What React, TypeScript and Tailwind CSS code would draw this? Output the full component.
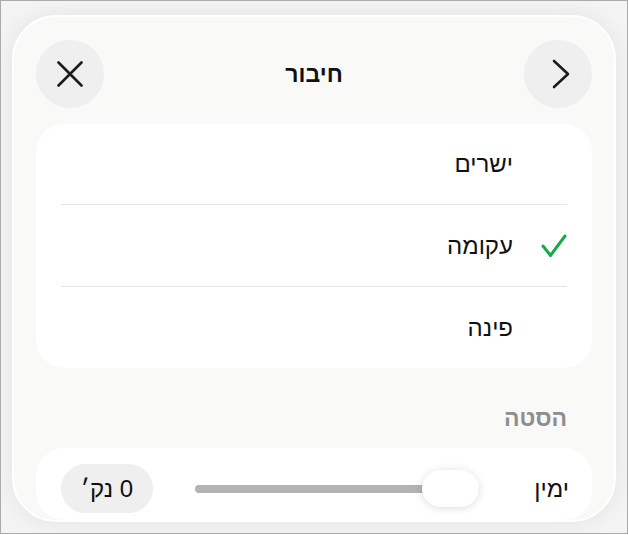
import React from "react";

const font = { fontFamily: '"Liberation Sans", "DejaVu Sans", Arial, sans-serif' };

const options = [
  { label: "ישרים", checked: false },
  { label: "עקומה", checked: true },
  { label: "פינה", checked: false },
];

function RoundButton({ children }: { children: React.ReactNode }) {
  return (
    <div className="w-[68px] h-[68px] rounded-full bg-[#efefef] flex items-center justify-center">
      {children}
    </div>
  );
}

export default function App() {
  return (
    <div
      style={font}
      className="w-[628px] h-[534px] bg-[#f4f4f4] border border-[#ababab] pt-[14px] px-[11px] overflow-hidden"
    >
      <div className="h-[507px] rounded-[44px] bg-[#f9f9f8] border-2 border-white shadow-[0_0_24px_rgba(0,0,0,0.07)] overflow-hidden px-[22px] pt-[23px] flex flex-col">
        {/* header */}
        <div className="flex items-center justify-between h-[68px]">
          <RoundButton>
            <svg width="26" height="26" viewBox="0 0 26 26" fill="none" stroke="#1c1c1c" strokeWidth="2.6" strokeLinecap="round">
              <path d="M1.5 1.5 L24.5 24.5 M24.5 1.5 L1.5 24.5" />
            </svg>
          </RoundButton>
          <div className="text-[23px] font-bold text-[#111]" dir="rtl">חיבור</div>
          <RoundButton>
            <svg width="18" height="30" viewBox="0 0 18 30" fill="none" stroke="#1c1c1c" strokeWidth="2.6" strokeLinecap="round" strokeLinejoin="round" className="ml-[6px]">
              <path d="M2 2 L16 15 L2 28" />
            </svg>
          </RoundButton>
        </div>

        {/* options card */}
        <div className="mt-4 bg-white rounded-[28px] px-[25px]" dir="rtl">
          {options.map((o, i) => (
            <div key={o.label}>
              {i > 0 && <div className="h-px bg-[#e6e6e6]" />}
              <div className={`flex items-center gap-[27px] ${i === 0 ? "h-[80px]" : "h-[81px]"}`}>
                <div className="w-[27px] flex justify-center">
                  {o.checked && (
                    <svg width="26" height="24" viewBox="0 0 26 24" fill="none" stroke="#1aa84f" strokeWidth="3" strokeLinecap="round" strokeLinejoin="round">
                      <path d="M2 12 L9.5 21.5 L24 2" />
                    </svg>
                  )}
                </div>
                <div className="text-[24px] text-[#111]">{o.label}</div>
              </div>
            </div>
          ))}
        </div>

        {/* section title */}
        <div dir="rtl" className="mt-[38px] pr-[25px] text-[23px] font-bold text-[#8e8e8e] leading-6">
          הסטה
        </div>

        {/* offset card */}
        <div dir="rtl" className="mt-[18px] bg-white rounded-[28px] h-[90px] pr-[23px] pl-[25px] pt-4 flex items-start">
          <div className="h-[49px] flex items-center text-[24px] text-[#111]">ימין</div>
          <div className="h-[49px] flex items-center mr-[55px]">
            <div className="relative w-[284px] h-[37px] flex items-center">
              <div className="w-full h-2 rounded-full bg-[#b3b3b3]" />
              <div className="absolute right-0 top-0 w-[57px] h-[37px] rounded-full bg-white shadow-[0_1px_8px_rgba(0,0,0,0.14)]" />
            </div>
          </div>
          <div className="mr-auto w-[92px] h-[49px] rounded-full bg-[#efefef] flex items-center justify-center text-[24px] text-[#111]">
            0 נק׳
          </div>
        </div>
      </div>
    </div>
  );
}
